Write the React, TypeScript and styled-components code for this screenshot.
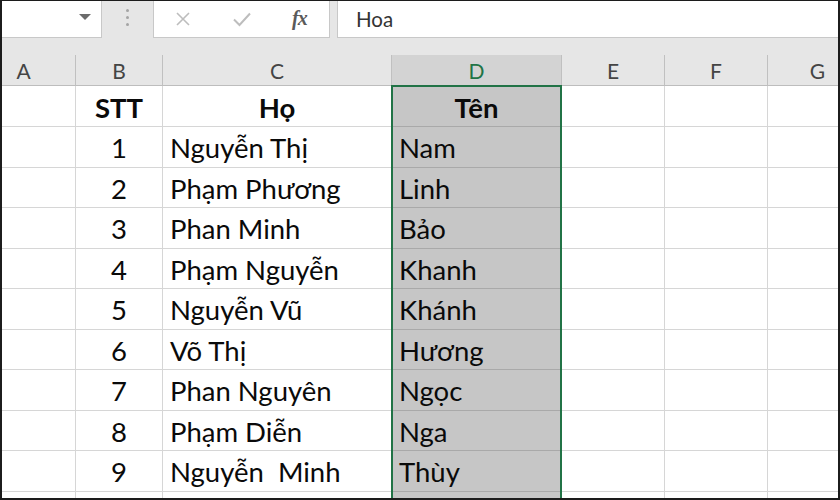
import React from "react";
import styled, { createGlobalStyle } from "styled-components";

const GlobalStyle = createGlobalStyle`
    html, body {
        margin: 0;
        padding: 0;
        background: #ffffff;
    }
`;

const font = `Lato, "Noto Sans", "DejaVu Sans", sans-serif`;

const Frame = styled.div`
    position: relative;
    width: 840px;
    height: 500px;
    overflow: hidden;
    background: #e6e6e6;
    font-family: ${font};

    &::after {
        content: "";
        position: absolute;
        inset: 0;
        border: 2px solid #1c1c1c;
        border-top-width: 1px;
        pointer-events: none;
    }
`;

const Toolbar = styled.div`
    display: flex;
    height: 38px;
    align-items: stretch;
`;

const NameBox = styled.div`
    width: 102px;
    background: #ffffff;
    border-right: 1px solid #c8c8c8;
    border-bottom: 1px solid #c8c8c8;
    box-sizing: border-box;
    display: flex;
    align-items: center;
    justify-content: flex-end;
    padding-right: 10px;
`;

const Caret = styled.span`
    width: 0;
    height: 0;
    border-left: 6px solid transparent;
    border-right: 6px solid transparent;
    border-top: 6px solid #6b6b6b;
    margin-top: -3px;
`;

const Grip = styled.div`
    width: 51px;
    display: flex;
    flex-direction: column;
    align-items: center;
    justify-content: center;
    gap: 4px;
    padding-bottom: 3px;
`;

const Dot = styled.span`
    width: 3px;
    height: 3px;
    border-radius: 50%;
    background: #a4a4a4;
`;

const ButtonBox = styled.div`
    width: 177px;
    background: #ffffff;
    border: 1px solid #c8c8c8;
    border-top: none;
    box-sizing: border-box;
    display: flex;
    align-items: center;
    padding-left: 21px;
`;

const ToolIcon = styled.span<{ $w: number }>`
    width: ${p => p.$w}px;
    display: flex;
    align-items: center;
`;

const Fx = styled.span`
    font-family: "Liberation Serif", "DejaVu Serif", serif;
    font-style: italic;
    font-weight: bold;
    font-size: 20px;
    color: #5a5a5a;
    letter-spacing: -1px;
`;

const FormulaInput = styled.div`
    flex: 1;
    margin-left: 7px;
    background: #ffffff;
    border-left: 1px solid #c8c8c8;
    border-bottom: 1px solid #c8c8c8;
    display: flex;
    align-items: center;
    padding-left: 18px;
    font-size: 20.5px;
    color: #333333;
`;

const Gap = styled.div`
    height: 17px;
`;

const Sheet = styled.div`
    position: relative;
    display: grid;
    grid-template-columns: 76px 87px 229px 170px 103px 103px 100px;
    grid-template-rows: 31px 41px;
    grid-auto-rows: 40.5px;
    background: #ffffff;
`;

const ColHead = styled.div<{ $selected?: boolean; $shift?: number }>`
    box-sizing: border-box;
    background: ${p => (p.$selected ? "#d3d3d3" : "#e6e6e6")};
    border-right: 1px solid #c0c0c0;
    border-bottom: 1px solid ${p => (p.$selected ? "#217346" : "#bdbdbd")};
    display: flex;
    align-items: center;
    justify-content: center;
    padding-right: ${p => p.$shift ?? 0}px;
    font-size: 21px;
    color: ${p => (p.$selected ? "#217346" : "#444444")};
`;

const Cell = styled.div<{ $align?: "left" | "center"; $bold?: boolean; $selected?: boolean }>`
    box-sizing: border-box;
    background: ${p => (p.$selected ? "#c6c6c6" : "#ffffff")};
    border-right: 1px solid #d6d6d6;
    border-bottom: 1px solid ${p => (p.$selected ? "#a9a9a9" : "#d6d6d6")};
    display: flex;
    align-items: center;
    justify-content: ${p => (p.$align === "center" ? "center" : "flex-start")};
    padding: 2px 0 0 ${p => (p.$align === "center" ? 0 : 7)}px;
    font-size: 27.5px;
    font-weight: ${p => (p.$bold ? 700 : 400)};
    color: #0a0a0a;
    white-space: pre;
    overflow: hidden;
`;

const Selection = styled.div`
    position: absolute;
    left: 391px;
    top: 30px;
    width: 171px;
    bottom: -20px;
    box-sizing: border-box;
    border: 2px solid #217346;
    pointer-events: none;
`;

const columns = ["A", "B", "C", "D", "E", "F", "G"];

const rows: [string, string, string][] = [
    ["1", "Nguyễn Thị", "Nam"],
    ["2", "Phạm Phương", "Linh"],
    ["3", "Phan Minh", "Bảo"],
    ["4", "Phạm Nguyễn", "Khanh"],
    ["5", "Nguyễn Vũ", "Khánh"],
    ["6", "Võ Thị", "Hương"],
    ["7", "Phan Nguyên", "Ngọc"],
    ["8", "Phạm Diễn", "Nga"],
    ["9", "Nguyễn  Minh", "Thùy"],
    ["", "", ""],
];

const CrossIcon = () => (
    <svg width="16" height="16" viewBox="0 0 16 16">
        <path d="M2 2 L14 14 M14 2 L2 14" stroke="#bdbdbd" strokeWidth="1.6" fill="none" />
    </svg>
);

const CheckIcon = () => (
    <svg width="20" height="16" viewBox="0 0 20 16">
        <path d="M2 8.5 L7.5 14 L18 2.5" stroke="#bdbdbd" strokeWidth="2" fill="none" />
    </svg>
);

const App = () => (
    <Frame>
        <GlobalStyle />
        <Toolbar>
            <NameBox>
                <Caret />
            </NameBox>
            <Grip>
                <Dot />
                <Dot />
                <Dot />
            </Grip>
            <ButtonBox>
                <ToolIcon $w={57}>
                    <CrossIcon />
                </ToolIcon>
                <ToolIcon $w={60}>
                    <CheckIcon />
                </ToolIcon>
                <ToolIcon $w={30}>
                    <Fx>fx</Fx>
                </ToolIcon>
            </ButtonBox>
            <FormulaInput>Hoa</FormulaInput>
        </Toolbar>
        <Gap />
        <Sheet>
            {columns.map(c => (
                <ColHead key={c} $selected={c === "D"} $shift={c === "A" ? 28 : 0}>
                    {c}
                </ColHead>
            ))}

            <Cell />
            <Cell $align="center" $bold>
                STT
            </Cell>
            <Cell $align="center" $bold>
                Họ
            </Cell>
            <Cell $align="center" $bold $selected>
                Tên
            </Cell>
            <Cell />
            <Cell />
            <Cell />

            {rows.map((r, i) => (
                <React.Fragment key={i}>
                    <Cell />
                    <Cell $align="center">{r[0]}</Cell>
                    <Cell>{r[1]}</Cell>
                    <Cell $selected>{r[2]}</Cell>
                    <Cell />
                    <Cell />
                    <Cell />
                </React.Fragment>
            ))}
            <Selection />
        </Sheet>
    </Frame>
);

export default App;
